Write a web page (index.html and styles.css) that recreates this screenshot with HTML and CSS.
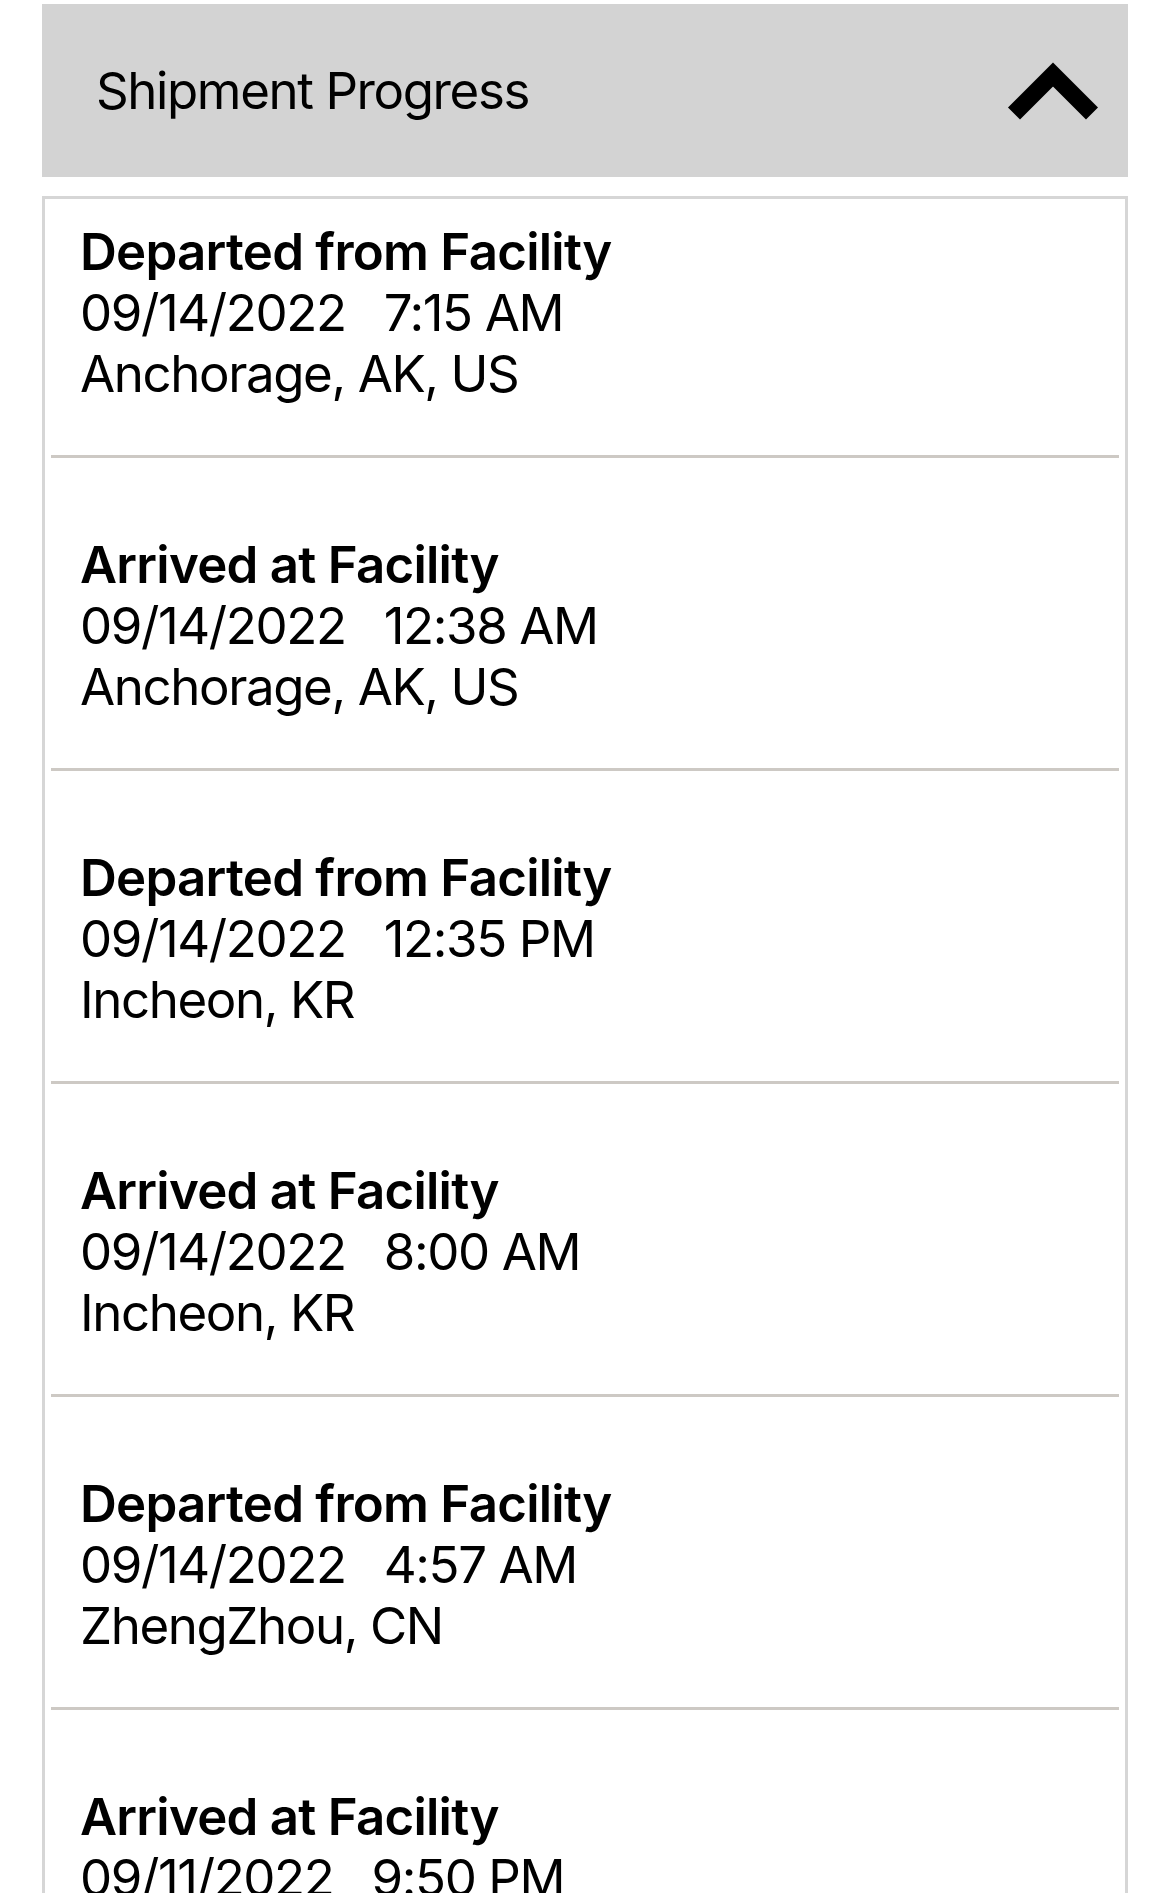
FILE: index.html
```html
<!DOCTYPE html>
<html lang="en">
<head>
<meta charset="utf-8">
<title>Shipment Progress</title>
<link rel="stylesheet" href="styles.css">
</head>
<body>
<main class="page">
  <header class="panel-header">
    <h1 class="panel-title">Shipment Progress</h1>
    <svg class="chevron" width="92" height="60" viewBox="0 0 92 60" aria-hidden="true">
      <polyline points="8,52.5 47,13.5 86,52.5" fill="none" stroke="#000" stroke-width="17" stroke-linecap="butt" stroke-linejoin="miter"/>
    </svg>
  </header>
  <ul class="events">
    <li class="event event-first">
      <div class="event-title">Departed from Facility</div>
      <div class="event-when"><span class="date">09/14/2022</span><span class="time">7:15 AM</span></div>
      <div class="event-where">Anchorage, AK, US</div>
    </li>
    <li class="event">
      <div class="event-title">Arrived at Facility</div>
      <div class="event-when"><span class="date">09/14/2022</span><span class="time">12:38 AM</span></div>
      <div class="event-where">Anchorage, AK, US</div>
    </li>
    <li class="event">
      <div class="event-title">Departed from Facility</div>
      <div class="event-when"><span class="date">09/14/2022</span><span class="time">12:35 PM</span></div>
      <div class="event-where">Incheon, KR</div>
    </li>
    <li class="event">
      <div class="event-title">Arrived at Facility</div>
      <div class="event-when"><span class="date">09/14/2022</span><span class="time">8:00 AM</span></div>
      <div class="event-where">Incheon, KR</div>
    </li>
    <li class="event">
      <div class="event-title">Departed from Facility</div>
      <div class="event-when"><span class="date">09/14/2022</span><span class="time">4:57 AM</span></div>
      <div class="event-where">ZhengZhou, CN</div>
    </li>
    <li class="event">
      <div class="event-title">Arrived at Facility</div>
      <div class="event-when"><span class="date">09/11/2022</span><span class="time">9:50 PM</span></div>
      <div class="event-where">ZhengZhou, CN</div>
    </li>
  </ul>
</main>
</body>
</html>
```
FILE: styles.css
```css
html, body {
  margin: 0;
  padding: 0;
  background: #ffffff;
}

body {
  height: 1893px;
  overflow: hidden;
  font-family: Inter, "Noto Sans", "Liberation Sans", sans-serif;
  color: #000;
}

.page {
  padding: 4px 42px 0;
}

.panel-header {
  display: flex;
  align-items: center;
  justify-content: space-between;
  height: 173px;
  padding: 0 30px 0 54px;
  background: #d3d3d3;
}

.panel-title {
  margin: 0;
  font-size: 51px;
  font-weight: 400;
  line-height: 61px;
  letter-spacing: -1.4px;
}

.chevron {
  display: block;
  flex: none;
}

.events {
  list-style: none;
  margin: 19px 0 0;
  padding: 0;
  border: 3px solid #d6d6d6;
  border-bottom: none;
}

.event {
  margin: 0 6px;
  padding: 76px 0 51px 29px;
  border-bottom: 3px solid #cdc9c4;
  font-size: 51px;
  line-height: 61px;
  letter-spacing: -1.4px;
}

.event-first {
  padding-top: 22px;
}

.event-title {
  font-weight: 600;
  letter-spacing: -0.75px;
}

.event-when .time {
  margin-left: 38px;
}
```
